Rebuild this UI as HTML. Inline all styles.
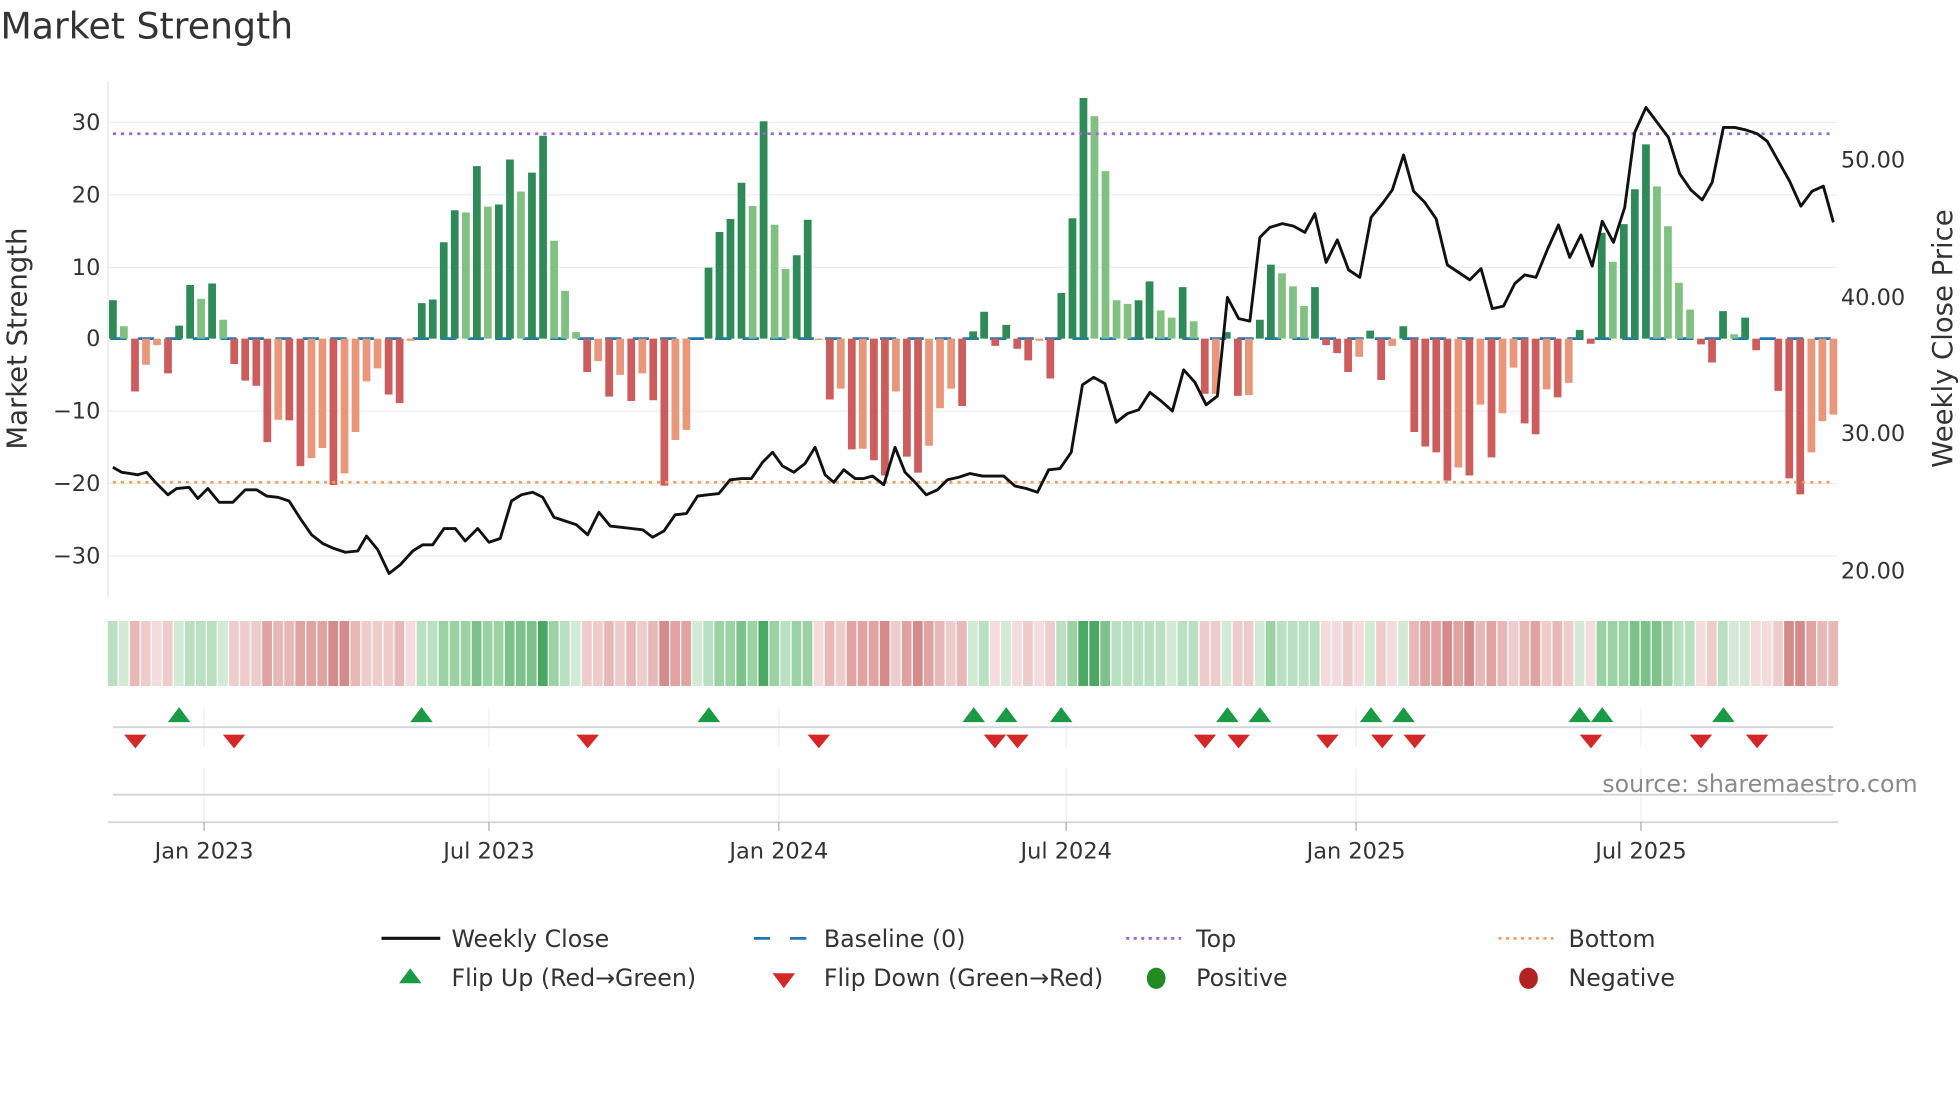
<!DOCTYPE html>
<html><head><meta charset="utf-8"><style>
html,body{margin:0;padding:0;background:#fff;}
svg{display:block;font-family:"DejaVu Sans","Liberation Sans",sans-serif;}
</style></head><body>
<svg width="1960" height="1102" viewBox="0 0 1568 882" xmlns="http://www.w3.org/2000/svg">
<rect width="1568" height="882" fill="#fff"/>
<text x="0" y="31" font-size="29" fill="#333">Market Strength</text>
<g stroke="#eceef1" stroke-width="1">
<line x1="86" x2="1470" y1="98" y2="98"/><line x1="86" x2="1470" y1="156" y2="156"/>
<line x1="86" x2="1470" y1="214" y2="214"/><line x1="86" x2="1470" y1="329" y2="329"/>
<line x1="86" x2="1470" y1="387" y2="387"/><line x1="86" x2="1470" y1="445" y2="445"/>
</g>
<line x1="86" x2="86" y1="65" y2="478" stroke="#e4e6ea"/>
<g font-size="18" fill="#333" text-anchor="end">
<text x="80" y="104">30</text><text x="80" y="162">20</text><text x="80" y="220">10</text>
<text x="80" y="277">0</text><text x="80" y="335">−10</text><text x="80" y="393">−20</text><text x="80" y="451">−30</text>
</g>
<g font-size="18" fill="#333">
<text x="1473" y="134">50.00</text><text x="1473" y="244">40.00</text>
<text x="1473" y="353">30.00</text><text x="1473" y="463">20.00</text>
</g>
<text transform="translate(21,271) rotate(-90)" font-size="22" fill="#333" text-anchor="middle">Market Strength</text>
<text transform="translate(1562,271) rotate(-90)" font-size="22" fill="#333" text-anchor="middle">Weekly Close Price</text>
<line x1="88" x2="1468" y1="271" y2="271" stroke="#1f77b4" stroke-width="2.2" stroke-dasharray="13,9"/>

<path fill="#2e8b57" d="M86.9 271v-30.7h6.2V271zM139.9 271v-10.4h6.2V271zM148.7 271v-42.9h6.2V271zM166.3 271v-44.1h6.2V271zM334.1 271v-28.4h6.2V271zM342.9 271v-31.3h6.2V271zM351.7 271v-77.1h6.2V271zM360.5 271v-102.7h6.2V271zM378.2 271v-138h6.2V271zM395.8 271v-107.3h6.2V271zM404.7 271v-143.3h6.2V271zM422.3 271v-132.8h6.2V271zM431.2 271v-162.4h6.2V271zM563.6 271v-56.8h6.2V271zM572.4 271v-85.3h6.2V271zM581.2 271v-95.7h6.2V271zM590 271v-124.7h6.2V271zM607.7 271v-174h6.2V271zM634.2 271v-66.7h6.2V271zM643 271v-95.1h6.2V271zM775.4 271v-5.8h6.2V271zM784.2 271v-21.5h6.2V271zM801.9 271v-11h6.2V271zM846 271v-36.5h6.2V271zM854.9 271v-96.3h6.2V271zM863.7 271v-192.6h6.2V271zM907.8 271v-30.7h6.2V271zM916.6 271v-45.8h6.2V271zM943.1 271v-41.2h6.2V271zM978.4 271v-5.2h6.2V271zM1004.9 271v-15.1h6.2V271zM1013.7 271v-59.2h6.2V271zM1049 271v-41.2h6.2V271zM1093.2 271v-6.4h6.2V271zM1119.7 271v-9.9h6.2V271zM1260.9 271v-7h6.2V271zM1278.5 271v-84.7h6.2V271zM1296.2 271v-91.6h6.2V271zM1305 271v-119.5h6.2V271zM1313.9 271v-155.4h6.2V271zM1375.6 271v-22h6.2V271zM1393.3 271v-16.8h6.2V271z"/>
<path fill="#80c080" d="M95.7 271v-9.9h6.2V271zM157.5 271v-31.9h6.2V271zM175.2 271v-15.1h6.2V271zM369.4 271v-100.9h6.2V271zM387 271v-105.6h6.2V271zM413.5 271v-117.7h6.2V271zM440 271v-78.3h6.2V271zM448.8 271v-38.3h6.2V271zM457.6 271v-5.2h6.2V271zM598.9 271v-106.1h6.2V271zM616.5 271v-91.1h6.2V271zM625.3 271v-55.7h6.2V271zM872.5 271v-178.1h6.2V271zM881.3 271v-134h6.2V271zM890.2 271v-30.7h6.2V271zM899 271v-27.8h6.2V271zM925.5 271v-22.6h6.2V271zM934.3 271v-16.8h6.2V271zM951.9 271v-13.9h6.2V271zM1022.6 271v-52.2h6.2V271zM1031.4 271v-41.8h6.2V271zM1040.2 271v-26.1h6.2V271zM1287.4 271v-61.5h6.2V271zM1322.7 271v-121.8h6.2V271zM1331.5 271v-89.9h6.2V271zM1340.3 271v-44.7h6.2V271zM1349.2 271v-23.2h6.2V271zM1384.5 271v-3.5h6.2V271z"/>
<path fill="#cd5c5c" d="M104.6 271v42.3h6.2V271zM131 271v27.8h6.2V271zM184 271v20.3h6.2V271zM192.8 271v33.6h6.2V271zM201.7 271v37.7h6.2V271zM210.5 271v82.9h6.2V271zM228.1 271v65.5h6.2V271zM237 271v102.1h6.2V271zM263.4 271v117.2h6.2V271zM307.6 271v44.7h6.2V271zM316.4 271v51.6h6.2V271zM466.5 271v26.7h6.2V271zM484.1 271v46.4h6.2V271zM501.8 271v49.9h6.2V271zM519.4 271v49.3h6.2V271zM528.3 271v117.7h6.2V271zM660.7 271v48.7h6.2V271zM678.3 271v88.7h6.2V271zM696 271v97.4h6.2V271zM704.8 271v109.6h6.2V271zM722.4 271v94.5h6.2V271zM731.3 271v107.3h6.2V271zM766.6 271v53.9h6.2V271zM793.1 271v5.8h6.2V271zM810.7 271v8.1h6.2V271zM819.5 271v17.4h6.2V271zM837.2 271v31.9h6.2V271zM960.8 271v44.1h6.2V271zM987.3 271v45.8h6.2V271zM1057.9 271v5.2h6.2V271zM1066.7 271v11.6h6.2V271zM1075.5 271v26.7h6.2V271zM1102 271v33.1h6.2V271zM1128.5 271v74.8h6.2V271zM1137.3 271v86.4h6.2V271zM1146.1 271v91.1h6.2V271zM1155 271v113.7h6.2V271zM1172.6 271v109.6h6.2V271zM1190.3 271v95.1h6.2V271zM1216.8 271v67.9h6.2V271zM1225.6 271v76.6h6.2V271zM1243.2 271v47h6.2V271zM1269.7 271v4.1h6.2V271zM1358 271v4.6h6.2V271zM1366.8 271v19.1h6.2V271zM1402.1 271v9.3h6.2V271zM1419.8 271v41.8h6.2V271zM1428.6 271v111.9h6.2V271zM1437.4 271v124.7h6.2V271z"/>
<path fill="#e9967a" d="M113.4 271v20.9h6.2V271zM122.2 271v5.2h6.2V271zM219.3 271v65h6.2V271zM245.8 271v95.7h6.2V271zM254.6 271v87.6h6.2V271zM272.3 271v107.9h6.2V271zM281.1 271v74.8h6.2V271zM289.9 271v34.2h6.2V271zM298.7 271v23.8h6.2V271zM325.2 271v1.7h6.2V271zM475.3 271v18h6.2V271zM492.9 271v29h6.2V271zM510.6 271v27.8h6.2V271zM537.1 271v81.2h6.2V271zM545.9 271v73.1h6.2V271zM651.8 271v1.2h6.2V271zM669.5 271v40h6.2V271zM687.1 271v88.2h6.2V271zM713.6 271v42.3h6.2V271zM740.1 271v85.8h6.2V271zM748.9 271v55.7h6.2V271zM757.8 271v40h6.2V271zM828.4 271v1.7h6.2V271zM969.6 271v44.1h6.2V271zM996.1 271v45.2h6.2V271zM1084.4 271v14.5h6.2V271zM1110.8 271v5.8h6.2V271zM1163.8 271v103.2h6.2V271zM1181.4 271v52.8h6.2V271zM1199.1 271v59.7h6.2V271zM1207.9 271v23.2h6.2V271zM1234.4 271v40.6h6.2V271zM1252.1 271v35.4h6.2V271zM1446.3 271v91.1h6.2V271zM1455.1 271v66.1h6.2V271zM1463.9 271v60.9h6.2V271z"/>

<path fill="#d2ead6" d="M94.7 497h7.8v52h-7.8zM138.9 497h7.8v52h-7.8zM174.2 497h7.8v52h-7.8zM456.6 497h7.8v52h-7.8zM553.7 497h7.8v52h-7.8zM774.4 497h7.8v52h-7.8zM800.9 497h7.8v52h-7.8zM933.3 497h7.8v52h-7.8zM977.4 497h7.8v52h-7.8zM1003.9 497h7.8v52h-7.8zM1092.2 497h7.8v52h-7.8zM1118.7 497h7.8v52h-7.8zM1259.9 497h7.8v52h-7.8zM1383.5 497h7.8v52h-7.8zM1392.3 497h7.8v52h-7.8z"/>
<path fill="#b9e0c0" d="M85.9 497h7.8v52h-7.8zM147.7 497h7.8v52h-7.8zM156.5 497h7.8v52h-7.8zM165.3 497h7.8v52h-7.8zM333.1 497h7.8v52h-7.8zM341.9 497h7.8v52h-7.8zM447.8 497h7.8v52h-7.8zM562.6 497h7.8v52h-7.8zM624.3 497h7.8v52h-7.8zM783.2 497h7.8v52h-7.8zM845 497h7.8v52h-7.8zM889.2 497h7.8v52h-7.8zM898 497h7.8v52h-7.8zM906.8 497h7.8v52h-7.8zM915.6 497h7.8v52h-7.8zM924.5 497h7.8v52h-7.8zM942.1 497h7.8v52h-7.8zM950.9 497h7.8v52h-7.8zM1021.6 497h7.8v52h-7.8zM1030.4 497h7.8v52h-7.8zM1039.2 497h7.8v52h-7.8zM1048 497h7.8v52h-7.8zM1339.3 497h7.8v52h-7.8zM1348.2 497h7.8v52h-7.8zM1374.6 497h7.8v52h-7.8z"/>
<path fill="#9ad2a4" d="M350.7 497h7.8v52h-7.8zM359.5 497h7.8v52h-7.8zM368.4 497h7.8v52h-7.8zM386 497h7.8v52h-7.8zM394.8 497h7.8v52h-7.8zM439 497h7.8v52h-7.8zM571.4 497h7.8v52h-7.8zM580.2 497h7.8v52h-7.8zM597.9 497h7.8v52h-7.8zM615.5 497h7.8v52h-7.8zM633.2 497h7.8v52h-7.8zM642 497h7.8v52h-7.8zM853.9 497h7.8v52h-7.8zM1012.7 497h7.8v52h-7.8zM1277.5 497h7.8v52h-7.8zM1286.4 497h7.8v52h-7.8zM1295.2 497h7.8v52h-7.8zM1330.5 497h7.8v52h-7.8z"/>
<path fill="#7cc28a" d="M377.2 497h7.8v52h-7.8zM403.7 497h7.8v52h-7.8zM412.5 497h7.8v52h-7.8zM421.3 497h7.8v52h-7.8zM589 497h7.8v52h-7.8zM880.3 497h7.8v52h-7.8zM1304 497h7.8v52h-7.8zM1312.9 497h7.8v52h-7.8zM1321.7 497h7.8v52h-7.8z"/>
<path fill="#4aa862" d="M430.2 497h7.8v52h-7.8zM606.7 497h7.8v52h-7.8zM862.7 497h7.8v52h-7.8zM871.5 497h7.8v52h-7.8z"/>
<path fill="#f4dcdd" d="M121.2 497h7.8v52h-7.8zM324.2 497h7.8v52h-7.8zM650.8 497h7.8v52h-7.8zM792.1 497h7.8v52h-7.8zM809.7 497h7.8v52h-7.8zM827.4 497h7.8v52h-7.8zM1056.9 497h7.8v52h-7.8zM1065.7 497h7.8v52h-7.8zM1083.4 497h7.8v52h-7.8zM1109.8 497h7.8v52h-7.8zM1268.7 497h7.8v52h-7.8zM1357 497h7.8v52h-7.8zM1401.1 497h7.8v52h-7.8zM1409.9 497h7.8v52h-7.8z"/>
<path fill="#efcccc" d="M112.4 497h7.8v52h-7.8zM130 497h7.8v52h-7.8zM183 497h7.8v52h-7.8zM191.8 497h7.8v52h-7.8zM200.7 497h7.8v52h-7.8zM288.9 497h7.8v52h-7.8zM297.7 497h7.8v52h-7.8zM306.6 497h7.8v52h-7.8zM465.5 497h7.8v52h-7.8zM474.3 497h7.8v52h-7.8zM491.9 497h7.8v52h-7.8zM509.6 497h7.8v52h-7.8zM668.5 497h7.8v52h-7.8zM712.6 497h7.8v52h-7.8zM756.8 497h7.8v52h-7.8zM818.5 497h7.8v52h-7.8zM836.2 497h7.8v52h-7.8zM959.8 497h7.8v52h-7.8zM968.6 497h7.8v52h-7.8zM986.3 497h7.8v52h-7.8zM995.1 497h7.8v52h-7.8zM1074.5 497h7.8v52h-7.8zM1101 497h7.8v52h-7.8zM1206.9 497h7.8v52h-7.8zM1233.4 497h7.8v52h-7.8zM1251.1 497h7.8v52h-7.8zM1365.8 497h7.8v52h-7.8zM1418.8 497h7.8v52h-7.8z"/>
<path fill="#e8b8b7" d="M103.6 497h7.8v52h-7.8zM218.3 497h7.8v52h-7.8zM227.1 497h7.8v52h-7.8zM280.1 497h7.8v52h-7.8zM315.4 497h7.8v52h-7.8zM483.1 497h7.8v52h-7.8zM500.8 497h7.8v52h-7.8zM518.4 497h7.8v52h-7.8zM659.7 497h7.8v52h-7.8zM747.9 497h7.8v52h-7.8zM765.6 497h7.8v52h-7.8zM1127.5 497h7.8v52h-7.8zM1180.4 497h7.8v52h-7.8zM1198.1 497h7.8v52h-7.8zM1215.8 497h7.8v52h-7.8zM1242.2 497h7.8v52h-7.8zM1454.1 497h7.8v52h-7.8zM1462.9 497h7.8v52h-7.8z"/>
<path fill="#e0a3a2" d="M209.5 497h7.8v52h-7.8zM236 497h7.8v52h-7.8zM244.8 497h7.8v52h-7.8zM253.6 497h7.8v52h-7.8zM536.1 497h7.8v52h-7.8zM544.9 497h7.8v52h-7.8zM677.3 497h7.8v52h-7.8zM686.1 497h7.8v52h-7.8zM695 497h7.8v52h-7.8zM721.4 497h7.8v52h-7.8zM739.1 497h7.8v52h-7.8zM1136.3 497h7.8v52h-7.8zM1145.1 497h7.8v52h-7.8zM1162.8 497h7.8v52h-7.8zM1189.3 497h7.8v52h-7.8zM1224.6 497h7.8v52h-7.8zM1445.3 497h7.8v52h-7.8z"/>
<path fill="#d58b89" d="M262.4 497h7.8v52h-7.8zM271.3 497h7.8v52h-7.8zM527.3 497h7.8v52h-7.8zM703.8 497h7.8v52h-7.8zM730.3 497h7.8v52h-7.8zM1154 497h7.8v52h-7.8zM1171.6 497h7.8v52h-7.8zM1427.6 497h7.8v52h-7.8zM1436.4 497h7.8v52h-7.8z"/>

<line x1="90" x2="1468" y1="107" y2="107" stroke="#9467dd" stroke-width="2.2" stroke-dasharray="2.5,4"/>
<line x1="90" x2="1468" y1="386" y2="386" stroke="#f0a060" stroke-width="2.2" stroke-dasharray="2.5,4"/>
<polyline fill="none" stroke="#111" stroke-width="2.3" stroke-linejoin="round" points="90,374 97,378 104,379 110,380 117,378 124,386 134,396 141,391 151,390 158,399 166,391 175,402 186,402 196,392 205,392 213,397 222,398 231,401 240,415 249,428 258,435 267,439 276,442 286,441 293,429 302,440 311,459 320,452 330,441 338,436 346,436 355,423 364,423 372,433 382,423 391,434 400,431 409,401 417,396 426,394 434,398 443,414 452,417 461,420 470,428 479,410 488,421 497,422 505,423 514,424 522,430 531,425 540,412 549,411 558,397 566,396 575,395 584,384 593,383 601,383 610,370 618,362 626,373 635,378 644,371 652,358 660,380 667,386 675,376 684,383 691,383 698,381 707,388 716,358 724,378 732,386 741,396 750,392 758,384 767,382 776,379 786,381 795,381 803,381 812,389 821,391 830,394 839,376 848,375 857,362 866,308 875,302 884,307 893,338 902,331 911,328 920,314 929,321 938,329 947,296 956,306 965,324 974,317 982,238 991,255 1000,257 1008,190 1016,182 1026,179 1035,181 1044,186 1052,171 1061,210 1070,192 1079,216 1088,222 1097,174 1106,163 1114,152 1123,124 1131,153 1140,162 1149,175 1158,212 1167,218 1176,224 1185,215 1194,247 1203,245 1212,227 1220,220 1229,222 1238,200 1247,180 1256,206 1265,188 1274,213 1282,177 1291,194 1300,166 1308,106 1317,86 1326,98 1335,110 1344,139 1353,152 1362,160 1370,146 1379,102 1388,102 1397,104 1406,107 1414,113 1423,129 1432,145 1441,165 1450,153 1459,149 1467,178"/>

<g stroke="#eceef1" stroke-width="1">
<line x1="163" x2="163" y1="567" y2="598"/><line x1="391" x2="391" y1="567" y2="598"/><line x1="623" x2="623" y1="567" y2="598"/><line x1="853" x2="853" y1="567" y2="598"/><line x1="1085" x2="1085" y1="567" y2="598"/><line x1="1313" x2="1313" y1="567" y2="598"/>
<line x1="163" x2="163" y1="615" y2="658"/><line x1="391" x2="391" y1="615" y2="658"/><line x1="623" x2="623" y1="615" y2="658"/><line x1="853" x2="853" y1="615" y2="658"/><line x1="1085" x2="1085" y1="615" y2="658"/><line x1="1313" x2="1313" y1="615" y2="658"/>
</g>
<line x1="90" x2="1467" y1="582" y2="582" stroke="#d3d5d8" stroke-width="1.5"/>
<line x1="90" x2="1467" y1="636" y2="636" stroke="#d3d5d8" stroke-width="1.5"/>
<line x1="86" x2="1471" y1="658" y2="658" stroke="#d3d5d8" stroke-width="1.5"/>
<g stroke="#aaa" stroke-width="1">
<line x1="163" x2="163" y1="658" y2="665"/><line x1="391" x2="391" y1="658" y2="665"/><line x1="623" x2="623" y1="658" y2="665"/><line x1="853" x2="853" y1="658" y2="665"/><line x1="1085" x2="1085" y1="658" y2="665"/><line x1="1313" x2="1313" y1="658" y2="665"/>
</g>
<path fill="#1a9a45" d="M143 566l-9 12h18zM337 566l-9 12h18zM567 566l-9 12h18zM779 566l-9 12h18zM805 566l-9 12h18zM849 566l-9 12h18zM982 566l-9 12h18zM1008 566l-9 12h18zM1097 566l-9 12h18zM1123 566l-9 12h18zM1264 566l-9 12h18zM1282 566l-9 12h18zM1379 566l-9 12h18z"/>
<path fill="#d62728" d="M99 588h18l-9 11zM178 588h18l-9 11zM461 588h18l-9 11zM646 588h18l-9 11zM787 588h18l-9 11zM805 588h18l-9 11zM955 588h18l-9 11zM982 588h18l-9 11zM1053 588h18l-9 11zM1097 588h18l-9 11zM1123 588h18l-9 11zM1264 588h18l-9 11zM1352 588h18l-9 11zM1397 588h18l-9 11z"/>
<text x="1282" y="634" font-size="19" fill="#8a8a8a">source: sharemaestro.com</text>
<g font-size="18" fill="#333" text-anchor="middle">
<text x="163" y="687">Jan 2023</text><text x="391" y="687">Jul 2023</text><text x="623" y="687">Jan 2024</text>
<text x="853" y="687">Jul 2024</text><text x="1085" y="687">Jan 2025</text><text x="1313" y="687">Jul 2025</text>
</g>
<g font-size="19" fill="#333">
<line x1="305" x2="352" y1="751" y2="751" stroke="#111" stroke-width="2.5"/>
<text x="361" y="758">Weekly Close</text>
<line x1="603" x2="647" y1="751" y2="751" stroke="#1f77b4" stroke-width="2.2" stroke-dasharray="13,16"/>
<text x="659" y="758">Baseline (0)</text>
<line x1="901" x2="945" y1="751" y2="751" stroke="#9467dd" stroke-width="2.2" stroke-dasharray="2.5,3.5"/>
<text x="957" y="758">Top</text>
<line x1="1199" x2="1243" y1="751" y2="751" stroke="#f0a060" stroke-width="2.2" stroke-dasharray="2.5,3.5"/>
<text x="1255" y="758">Bottom</text>
<polygon points="328,775 319,787 337,787" fill="#1a9a45"/>
<text x="361" y="789">Flip Up (Red→Green)</text>
<polygon points="618,779 636,779 627,791" fill="#d62728"/>
<text x="659" y="789">Flip Down (Green→Red)</text>
<ellipse cx="925" cy="783" rx="7.5" ry="8.5" fill="#228b22"/>
<text x="957" y="789">Positive</text>
<ellipse cx="1223" cy="783" rx="7.5" ry="8.5" fill="#b22222"/>
<text x="1255" y="789">Negative</text>
</g>
</svg>
</body></html>
